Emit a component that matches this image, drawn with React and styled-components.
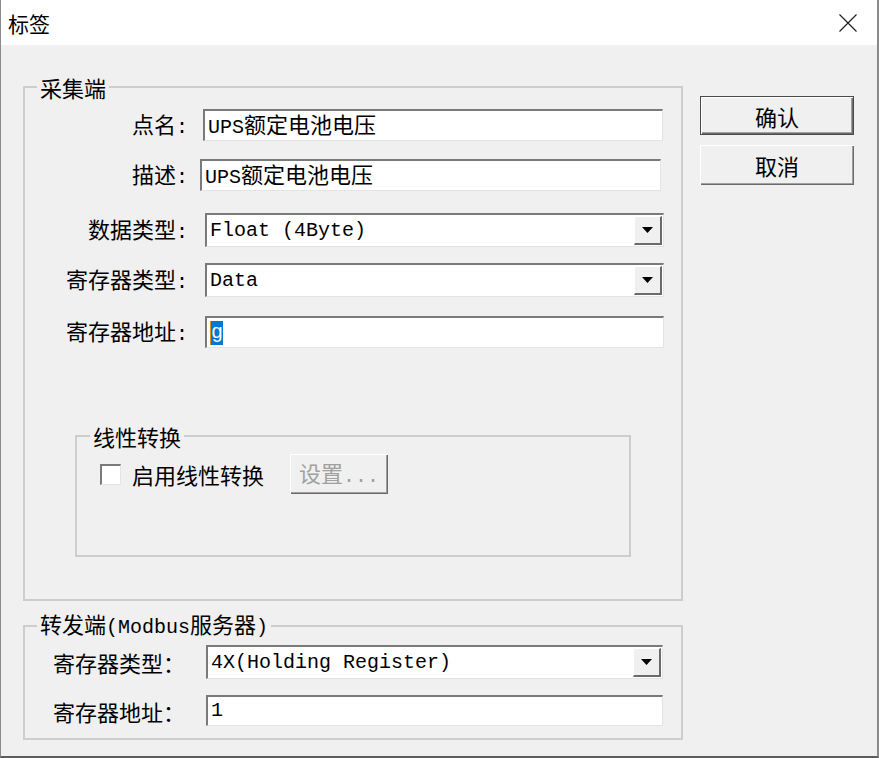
import styled, { createGlobalStyle } from "styled-components";

const GlobalStyle = createGlobalStyle`
  html, body {
    margin: 0;
    padding: 0;
    background: #f0f0f0;
  }
  body {
    font-family: "Noto Sans CJK SC", "Liberation Sans", sans-serif;
    color: #000;
  }
`;

const Window = styled.div`
  width: 879px;
  height: 758px;
  box-sizing: border-box;
  background: #f0f0f0;
  border-left: 1px solid #8a8a8a;
  border-right: 2px solid #8a8a8a;
  border-bottom: 2px solid #5c5c5c;
  display: flex;
  flex-direction: column;
`;

const TitleBar = styled.div`
  height: 45px;
  flex: none;
  background: #fff;
  display: flex;
  align-items: center;
  justify-content: space-between;
  padding: 0 20px 0 7px;
`;

const Title = styled.span`
  font-size: 21px;
  line-height: 24px;
`;

const Body = styled.div`
  display: flex;
  align-items: flex-start;
  padding: 30px 0 0 22px;
`;

const LeftCol = styled.div`
  width: 660px;
  display: flex;
  flex-direction: column;
`;

const RightCol = styled.div`
  margin-left: 17px;
  padding-top: 21px;
  display: flex;
  flex-direction: column;
  gap: 10px;
`;

const Group = styled.fieldset`
  margin: ${(p) => p.$margin || "0"};
  padding: ${(p) => p.$pad || "0"};
  width: ${(p) => p.$width || "auto"};
  height: ${(p) => p.$height || "auto"};
  box-sizing: border-box;
  min-width: 0;
  border: 2px solid #cdcdcd;
`;

const Legend = styled.legend`
  margin-left: ${(p) => p.$indent || 12}px;
  padding: 0 3px;
  font-size: 22px;
  line-height: 24px;
  white-space: nowrap;
`;

const Latin = styled.span`
  font-family: "Liberation Mono", "DejaVu Sans Mono", monospace;
  font-size: 20px;
`;

const Row = styled.div`
  display: flex;
  align-items: center;
  margin-top: ${(p) => p.$top || 0}px;
`;

const Label = styled.span`
  width: ${(p) => p.$width}px;
  box-sizing: border-box;
  flex: none;
  text-align: ${(p) => p.$align || "right"};
  padding-left: ${(p) => p.$pl || 0}px;
  font-size: 22px;
  line-height: 24px;
  white-space: nowrap;
`;

const Field = styled.div`
  margin-left: ${(p) => p.$ml || 0}px;
  width: ${(p) => p.$w}px;
  height: ${(p) => p.$h}px;
  box-sizing: border-box;
  flex: none;
  background: #fff;
  border-style: solid;
  border-width: 2px 1px 1px 2px;
  border-color: #7a7a7a #e4e4e4 #e4e4e4 #7a7a7a;
  display: flex;
  align-items: center;
  padding-left: 3px;
  white-space: nowrap;
`;

const Value = styled.span`
  flex: 1;
  font-family: "Liberation Mono", "Noto Sans CJK SC", monospace;
  font-size: 20px;
  line-height: 24px;
`;

const Cjk = styled.span`
  font-family: "Noto Sans CJK SC", sans-serif;
  font-size: 22px;
`;

const DropBtn = styled.div`
  width: 28px;
  align-self: stretch;
  margin: 1px 1px 1px 0;
  box-sizing: border-box;
  background: #f0f0f0;
  border-style: solid;
  border-width: 1px 2px 2px 1px;
  border-color: #fff #6a6a6a #6a6a6a #fff;
  display: flex;
  align-items: center;
  justify-content: center;
`;

const Selected = styled.span`
  background: #0078d7;
  color: #fff;
  border-left: 1px solid #e88a1a;
  font-family: "Liberation Mono", monospace;
  font-size: 20px;
  line-height: 24px;
`;

const CheckRow = styled.div`
  display: flex;
  align-items: center;
  height: 40px;
  padding-left: 23px;
`;

const CheckBox = styled.span`
  width: 21px;
  height: 21px;
  box-sizing: border-box;
  background: #fff;
  border-style: solid;
  border-width: 2px 1px 1px 2px;
  border-color: #7a7a7a #e4e4e4 #e4e4e4 #7a7a7a;
  flex: none;
`;

const CheckText = styled.span`
  margin-left: 11px;
  font-size: 22px;
  line-height: 24px;
`;

const Button = styled.div`
  width: ${(p) => p.$w || 154}px;
  height: ${(p) => p.$h || 39}px;
  margin-left: ${(p) => p.$ml || 0}px;
  box-sizing: border-box;
  background: #f0f0f0;
  display: flex;
  align-items: center;
  justify-content: center;
  color: ${(p) => (p.$disabled ? "#a0a0a0" : "#000")};
  border: ${(p) => (p.$default ? "1px solid #4a4a4a" : "none")};
  box-shadow: inset 1px 1px #ffffff, inset -1px -1px #6a6a6a,
    inset -2px -2px #a0a0a0;
`;

const Caption = styled.span`
  font-size: 22px;
  line-height: 24px;
  white-space: nowrap;
`;

const CloseIcon = () => (
  <svg width="18" height="18" viewBox="0 0 18 18">
    <path d="M0.5 0.5 L17.5 17.5 M17.5 0.5 L0.5 17.5" stroke="#1a1a1a" strokeWidth="1.1" fill="none" />
  </svg>
);

const Arrow = () => (
  <svg width="11" height="6" viewBox="0 0 11 6">
    <path d="M0 0 H11 L5.5 6 Z" fill="#000" />
  </svg>
);

const Combo = ({ value, ml, w, h }) => (
  <Field $ml={ml} $w={w} $h={h}>
    <Value>{value}</Value>
    <DropBtn>
      <Arrow />
    </DropBtn>
  </Field>
);

export default function App() {
  return (
    <>
      <GlobalStyle />
      <Window>
        <TitleBar>
          <Title>标签</Title>
          <CloseIcon />
        </TitleBar>
        <Body>
          <LeftCol>
            <Group $pad="10px 0 42px 0">
              <Legend $indent={12}>采集端</Legend>
              <Row>
                <Label $width={163}>
                  点名<Latin>:</Latin>
                </Label>
                <Field $ml={15} $w={460} $h={32}>
                  <Value>
                    UPS<Cjk>额定电池电压</Cjk>
                  </Value>
                </Field>
              </Row>
              <Row $top={18}>
                <Label $width={163}>
                  描述<Latin>:</Latin>
                </Label>
                <Field $ml={12} $w={461} $h={32}>
                  <Value>
                    UPS<Cjk>额定电池电压</Cjk>
                  </Value>
                </Field>
              </Row>
              <Row $top={22}>
                <Label $width={163}>
                  数据类型<Latin>:</Latin>
                </Label>
                <Combo value="Float (4Byte)" ml={17} w={459} h={34} />
              </Row>
              <Row $top={16}>
                <Label $width={163}>
                  寄存器类型<Latin>:</Latin>
                </Label>
                <Combo value="Data" ml={17} w={459} h={34} />
              </Row>
              <Row $top={19}>
                <Label $width={163}>
                  寄存器地址<Latin>:</Latin>
                </Label>
                <Field $ml={17} $w={459} $h={32}>
                  <Selected>g</Selected>
                </Field>
              </Row>

              <Group $margin="76px 0 0 50px" $pad="6px 0 0 0" $width="556px" $height="133px">
                <Legend $indent={13}>线性转换</Legend>
                <CheckRow>
                  <CheckBox />
                  <CheckText>启用线性转换</CheckText>
                  <Button $w={98} $h={40} $ml={26} $disabled>
                    <Caption>
                      设置<Latin>...</Latin>
                    </Caption>
                  </Button>
                </CheckRow>
              </Group>
            </Group>

            <Group $margin="10px 0 0 0" $pad="5px 0 12px 0">
              <Legend $indent={12}>
                转发端<Latin>(Modbus</Latin>服务器<Latin>)</Latin>
              </Legend>
              <Row>
                <Label $width={181} $align="left" $pl={28}>
                  寄存器类型：
                </Label>
                <Combo value="4X(Holding Register)" w={457} h={34} />
              </Row>
              <Row $top={16}>
                <Label $width={181} $align="left" $pl={28}>
                  寄存器地址：
                </Label>
                <Field $w={457} $h={31}>
                  <Value>1</Value>
                </Field>
              </Row>
            </Group>
          </LeftCol>
          <RightCol>
            <Button $default>
              <Caption>确认</Caption>
            </Button>
            <Button $h={40}>
              <Caption>取消</Caption>
            </Button>
          </RightCol>
        </Body>
      </Window>
    </>
  );
}
